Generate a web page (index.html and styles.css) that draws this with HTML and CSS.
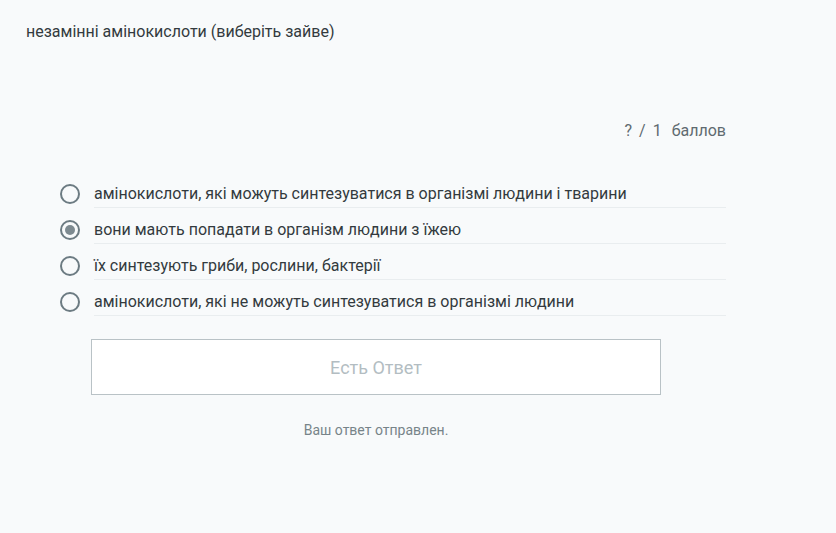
FILE: index.html
```html
<!DOCTYPE html>
<html lang="uk">
<head>
<meta charset="utf-8">
<link rel="stylesheet" href="styles.css">
</head>
<body>
<div class="page">
  <div class="question">незамінні амінокислоти (виберіть зайве)</div>
  <div class="score"><span>?</span><span>/</span><span>1</span><span>баллов</span></div>
  <div class="options">
    <div class="option"><span class="radio"></span><span class="label">амінокислоти, які можуть синтезуватися в організмі людини і тварини</span></div>
    <div class="option"><span class="radio checked"></span><span class="label">вони мають попадати в організм людини з їжею</span></div>
    <div class="option"><span class="radio"></span><span class="label">їх синтезують гриби, рослини, бактерії</span></div>
    <div class="option"><span class="radio"></span><span class="label">амінокислоти, які не можуть синтезуватися в організмі людини</span></div>
  </div>
  <div class="button">Есть Ответ</div>
  <div class="message">Ваш ответ отправлен.</div>
</div>
</body>
</html>
```
FILE: styles.css
```css
html, body {
  margin: 0;
  padding: 0;
  background: #f8fafb;
  font-family: Roboto, "Liberation Sans", sans-serif;
}
.page {
  width: 700px;
  padding: 20px 0 0 26px;
  display: flex;
  flex-direction: column;
}
.question {
  font-size: 16px;
  line-height: 24px;
  color: #333a3e;
}
.score {
  margin-top: 75px;
  align-self: flex-end;
  display: flex;
  gap: 7px;
  font-size: 16px;
  line-height: 24px;
  color: #5f6a70;
}
.score span:last-child { margin-left: 3px; }
.options {
  margin: 37px 0 0 34px;
  display: flex;
  flex-direction: column;
  gap: 8px;
}
.option {
  display: flex;
  align-items: center;
  gap: 14px;
}
.radio {
  width: 16px;
  height: 16px;
  border: 2px solid #6c7b82;
  border-radius: 50%;
  flex: none;
  display: flex;
  align-items: center;
  justify-content: center;
}
.radio.checked::after {
  content: "";
  width: 10px;
  height: 10px;
  border-radius: 50%;
  background: #7d8a90;
}
.label {
  flex: 1;
  font-size: 16px;
  line-height: 26px;
  padding-top: 1px;
  border-bottom: 1px solid #e9edef;
  color: #333a3e;
}
.button {
  margin: 23px 0 0 65px;
  width: 568px;
  height: 54px;
  border: 1px solid #b9c2c6;
  background: #fff;
  display: flex;
  align-items: center;
  justify-content: center;
  font-size: 18px;
  color: #b3bdc2;
}
.message {
  margin: 25px 0 0 65px;
  width: 570px;
  text-align: center;
  font-size: 14px;
  line-height: 20px;
  color: #778489;
}
```
